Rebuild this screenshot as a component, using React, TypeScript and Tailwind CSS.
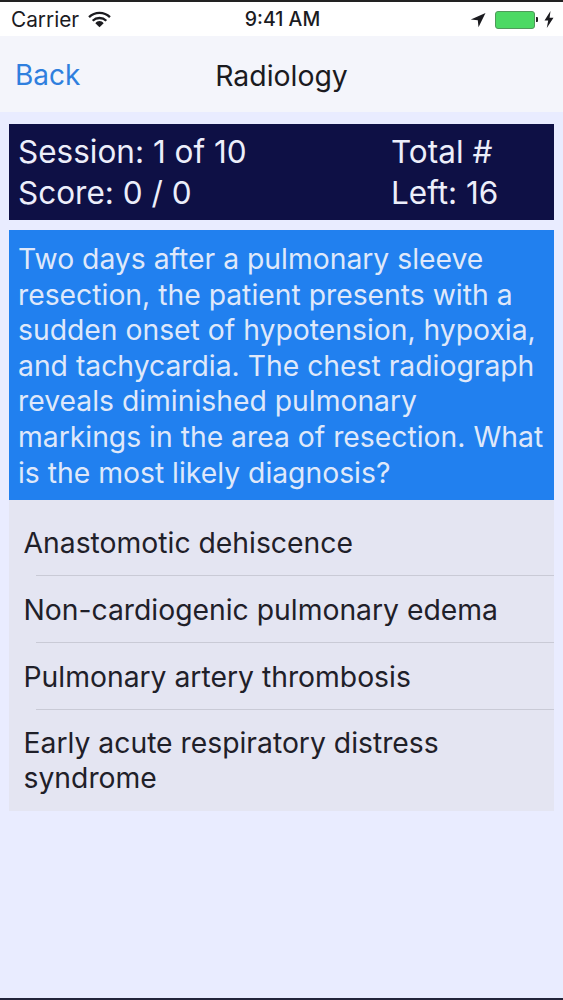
const answers = [
  'Anastomotic dehiscence',
  'Non-cardiogenic pulmonary edema',
  'Pulmonary artery thrombosis',
  'Early acute respiratory distress syndrome',
];

const questionLines = [
  'Two days after a pulmonary sleeve',
  'resection, the patient presents with a',
  'sudden onset of hypotension, hypoxia,',
  'and tachycardia. The chest radiograph',
  'reveals diminished pulmonary',
  'markings in the area of resection. What',
  'is the most likely diagnosis?',
];

const StatusBar = () => (
  <div className="flex h-[36px] items-center justify-between border-t-2 border-[#222] bg-white pl-[11px] pr-[9px] pt-[1px] text-[#1b1b1f]">
    <div className="flex flex-1 items-center gap-[9px] text-[20.800px]">
      <span>Carrier</span>
      <svg width="23" height="17" viewBox="0 0 22 16" fill="none" stroke="currentColor" strokeWidth="2.200">
        <path d="M1 5.800C6.600.4 15.400.4 21 5.800" />
        <path d="M4.500 9.200C8.100 5.700 13.900 5.700 17.500 9.200" />
        <path d="M7 11.500 11 15.500 15 11.500C13 8.800 9 8.800 7 11.500z" fill="currentColor" stroke="none" />
      </svg>
    </div>
    <span className="text-[19.500px] font-medium">9:41 AM</span>
    <div className="flex flex-1 items-center justify-end">
      <svg width="16" height="16" viewBox="0 0 16 16" fill="currentColor" className="mr-[9px]">
        <path d="M15.500 1 .8 7.600l7 .6.7 7z" />
      </svg>
      <div className="h-[18px] w-[40px] rounded-[3px] border border-[#4f9a5a] bg-[#4cd964]" />
      <div className="ml-[1px] h-[5px] w-[2px] rounded-r-[1px] bg-[#222]" />
      <svg width="10" height="17" viewBox="0 0 10 17" fill="currentColor" className="ml-[6px]">
        <path d="M6.500 0 .5 9.500h3.700L2.800 17 9.500 6.800H5.600z" />
      </svg>
    </div>
  </div>
);

export default function App() {
  return (
    <div className="flex h-[1000px] flex-col bg-[#e9ecff] font-['Inter',sans-serif]">
      <StatusBar />

      {/* Nav bar */}
      <div className="relative flex h-[76px] items-center justify-center bg-[#f4f5fb] pt-[4px]">
        <span className="absolute left-[15px] top-[20px] text-[28px] leading-[38px] text-[#2f7fde]">Back</span>
        <span className="text-[28.400px] leading-[38px] text-[#1b1b1f]">Radiology</span>
      </div>

      <div className="flex flex-1 flex-col px-[9px] pt-[12px]">
        {/* Session info */}
        <div className="flex h-[96px] justify-between bg-[#0e1045] pl-[9px] pt-[7px] text-[31.500px] leading-[41px] text-[#eceefa]">
          <div className="flex flex-col">
            <span>Session: 1 of 10</span>
            <span>Score: 0 / 0</span>
          </div>
          <div className="flex w-[163px] flex-col">
            <span>Total #</span>
            <span>Left: 16</span>
          </div>
        </div>

        {/* Question */}
        <div className="mt-[10px] flex h-[270px] flex-col bg-[#2180ef] pl-[9px] pt-[12px] text-[28.300px] leading-[35.600px] text-[#dfe8fa]">
          {questionLines.map((line) => (
            <span key={line} className="whitespace-nowrap">{line}</span>
          ))}
        </div>

        {/* Answers */}
        <div className="flex h-[311px] flex-col bg-[#e4e5f2] text-[28.300px] leading-[35px] text-[#1f2029]">
          {answers.map((answer, i) => (
            <div key={answer} className="pl-[14.500px] pr-[40px]">
              <div className={i === 3 ? 'pt-[16px]' : i === 0 ? 'flex h-[75px] items-end pb-[14px]' : 'flex h-[66px] items-end pb-[14px]'}>{answer}</div>
              {i < 3 && <div className="ml-[12.500px] mr-[-40px] h-[1px] bg-[#c9cad6]" />}
            </div>
          ))}
        </div>
      </div>

      <div className="h-[2px] bg-[#22243a]" />
    </div>
  );
}
